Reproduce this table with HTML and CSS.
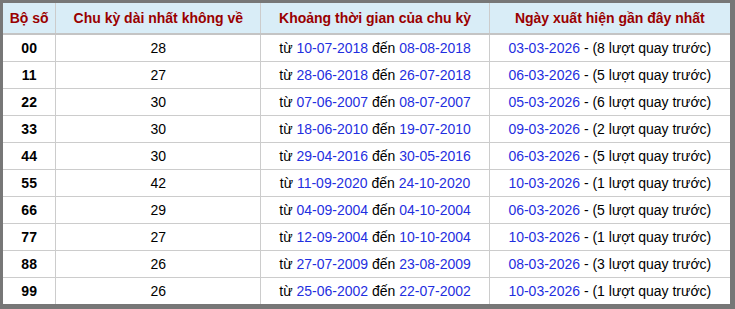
FILE: index.html
```html
<!DOCTYPE html>
<html lang="vi">
<head>
  <meta charset="UTF-8">
  <title>Chu kỳ dài nhất không về</title>
  <link rel="stylesheet" href="styles.css">
</head>
<body>

<table class="bang-chu-ky">
  <colgroup>
    <col class="c-bo">
    <col class="c-chuky">
    <col class="c-khoang">
    <col class="c-ngay">
  </colgroup>
  <thead>
    <tr>
      <th>Bộ số</th>
      <th>Chu kỳ dài nhất không về</th>
      <th>Khoảng thời gian của chu kỳ</th>
      <th>Ngày xuất hiện gần đây nhất</th>
    </tr>
  </thead>
  <tbody>
    <tr>
      <td class="bo">00</td>
      <td>28</td>
      <td>từ <span class="ngay">10-07-2018</span> đến <span class="ngay">08-08-2018</span></td>
      <td><span class="ngay">03-03-2026</span> - (8 lượt quay trước)</td>
    </tr>
    <tr>
      <td class="bo">11</td>
      <td>27</td>
      <td>từ <span class="ngay">28-06-2018</span> đến <span class="ngay">26-07-2018</span></td>
      <td><span class="ngay">06-03-2026</span> - (5 lượt quay trước)</td>
    </tr>
    <tr>
      <td class="bo">22</td>
      <td>30</td>
      <td>từ <span class="ngay">07-06-2007</span> đến <span class="ngay">08-07-2007</span></td>
      <td><span class="ngay">05-03-2026</span> - (6 lượt quay trước)</td>
    </tr>
    <tr>
      <td class="bo">33</td>
      <td>30</td>
      <td>từ <span class="ngay">18-06-2010</span> đến <span class="ngay">19-07-2010</span></td>
      <td><span class="ngay">09-03-2026</span> - (2 lượt quay trước)</td>
    </tr>
    <tr>
      <td class="bo">44</td>
      <td>30</td>
      <td>từ <span class="ngay">29-04-2016</span> đến <span class="ngay">30-05-2016</span></td>
      <td><span class="ngay">06-03-2026</span> - (5 lượt quay trước)</td>
    </tr>
    <tr>
      <td class="bo">55</td>
      <td>42</td>
      <td>từ <span class="ngay">11-09-2020</span> đến <span class="ngay">24-10-2020</span></td>
      <td><span class="ngay">10-03-2026</span> - (1 lượt quay trước)</td>
    </tr>
    <tr>
      <td class="bo">66</td>
      <td>29</td>
      <td>từ <span class="ngay">04-09-2004</span> đến <span class="ngay">04-10-2004</span></td>
      <td><span class="ngay">06-03-2026</span> - (5 lượt quay trước)</td>
    </tr>
    <tr>
      <td class="bo">77</td>
      <td>27</td>
      <td>từ <span class="ngay">12-09-2004</span> đến <span class="ngay">10-10-2004</span></td>
      <td><span class="ngay">10-03-2026</span> - (1 lượt quay trước)</td>
    </tr>
    <tr>
      <td class="bo">88</td>
      <td>26</td>
      <td>từ <span class="ngay">27-07-2009</span> đến <span class="ngay">23-08-2009</span></td>
      <td><span class="ngay">08-03-2026</span> - (3 lượt quay trước)</td>
    </tr>
    <tr>
      <td class="bo">99</td>
      <td>26</td>
      <td>từ <span class="ngay">25-06-2002</span> đến <span class="ngay">22-07-2002</span></td>
      <td><span class="ngay">10-03-2026</span> - (1 lượt quay trước)</td>
    </tr>
  </tbody>
</table>

</body>
</html>
```

FILE: styles.css
```css
body {
  margin: 0;
  background-color: #fff;
  font-family: 'Liberation Sans', Arial, sans-serif;
  font-size: 14px;
  color: #000;
}

.bang-chu-ky {
  width: 735px;
  border-collapse: collapse;
  table-layout: fixed;
  border-style: solid;
  border-color: #777;
  border-width: 3px 5px 5px 3px;
}

.c-bo { width: 54px; }
.c-chuky { width: 204px; }
.c-khoang { width: 227px; }
.c-ngay { width: 242px; }

.bang-chu-ky th {
  height: 30px;
  padding: 0;
  background-color: #d9edf7;
  color: #990000;
  font-weight: bold;
  font-size: 14px;
  text-align: center;
  border-left: 1px solid #ccc;
  border-bottom: 2px solid #c4c4c4;
}

.bang-chu-ky td {
  height: 26px;
  padding: 0;
  text-align: center;
  border-left: 1px solid #ccc;
  border-top: 1px solid #ccc;
}

.bang-chu-ky th:first-child,
.bang-chu-ky td:first-child {
  border-left: none;
}

.bang-chu-ky tbody tr:first-child td {
  border-top: none;
}

.bo {
  font-weight: bold;
}

.ngay {
  color: #1f2fe0;
}
```
